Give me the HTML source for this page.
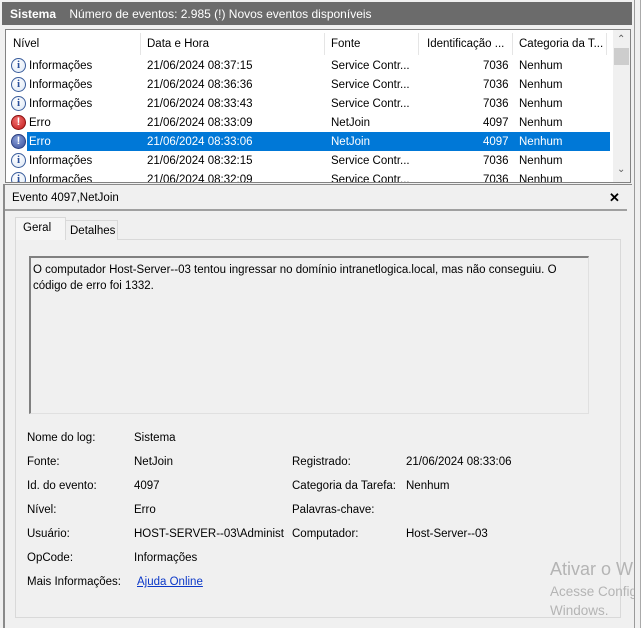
<!DOCTYPE html>
<html><head><meta charset="utf-8"><style>
*{margin:0;padding:0;box-sizing:border-box}
body{width:641px;height:628px;overflow:hidden;background:#f0f0f0;font-family:"Liberation Sans",sans-serif;font-size:11.5px;color:#000;position:relative}
.a{position:absolute;white-space:nowrap}
.title{left:2px;top:2px;width:630px;height:23px;background:#6b6b6b;color:#fff;font-size:12px;line-height:24px;padding-left:8px}
.list{left:5px;top:29px;width:626px;height:154px;background:#fff;border:1px solid #828282;overflow:hidden}
.hdr{position:absolute;top:1px;left:0;height:24px;width:606px;line-height:26px}
.vd{position:absolute;top:2px;width:1px;height:22px;background:#e5e5e5}
.row{position:absolute;left:0;width:606px;height:19px;line-height:20px}
.ic{position:absolute;left:5px;top:2px;width:15px;height:15px;border-radius:50%;border:1px solid #3a5d9c;background:radial-gradient(circle at 40% 35%,#fff,#dbe6f5);color:#2a4f9a;font:bold 11px "Liberation Serif",serif;text-align:center;line-height:13px}
.er{border-color:#8a1010;background:radial-gradient(circle at 40% 35%,#f07070,#c21a1a);color:#fff;font-family:"Liberation Sans";}
.es{border-color:#2a3f80;background:radial-gradient(circle at 40% 35%,#8a9fd8,#3a4f9a);color:#fff;font-family:"Liberation Sans";}
.sb{position:absolute;left:607px;top:0;width:17px;height:152px;background:#f0f0f0}
.pane{left:3px;top:184px;width:629px;height:444px;border-left:2px solid #8a8a8a;border-top:1px solid #8a8a8a}
</style></head><body>
<div class="a" style="left:0;top:0;width:641px;height:628px;border-right:1px solid #aaa"></div>
<div class="a" style="left:634px;top:0;width:1px;height:628px;background:#9a9a9a"></div>
<div class="a title"><b>Sistema</b>&nbsp;&nbsp;&nbsp;&nbsp;Número de eventos: 2.985 (!) Novos eventos disponíveis</div>
<div class="a list">
 <div class="hdr"><span class="a" style="left:7px">Nível</span><span class="vd" style="left:134px"></span><span class="a" style="left:141px">Data e Hora</span><span class="vd" style="left:318px"></span><span class="a" style="left:325px">Fonte</span><span class="vd" style="left:412px"></span><span class="a" style="left:421px">Identificação ...</span><span class="vd" style="left:506px"></span><span class="a" style="left:513px">Categoria da T...</span><span class="vd" style="left:600px"></span></div>
 <div class="sb"><span class="a" style="left:4px;top:4px;font-size:10px;color:#606060">&#8963;</span><div class="a" style="left:1px;top:18px;width:15px;height:17px;background:#cdcdcd"></div><span class="a" style="left:4px;top:134px;font-size:10px;color:#606060">&#8964;</span></div>
 <div class="row" style="top:26px"><span class="ic">i</span><span class="a" style="left:23px">Informações</span><span class="a" style="left:141px">21/06/2024 08:37:15</span><span class="a" style="left:325px">Service Contr...</span><span class="a" style="left:477px">7036</span><span class="a" style="left:513px">Nenhum</span></div>
 <div class="row" style="top:45px"><span class="ic">i</span><span class="a" style="left:23px">Informações</span><span class="a" style="left:141px">21/06/2024 08:36:36</span><span class="a" style="left:325px">Service Contr...</span><span class="a" style="left:477px">7036</span><span class="a" style="left:513px">Nenhum</span></div>
 <div class="row" style="top:64px"><span class="ic">i</span><span class="a" style="left:23px">Informações</span><span class="a" style="left:141px">21/06/2024 08:33:43</span><span class="a" style="left:325px">Service Contr...</span><span class="a" style="left:477px">7036</span><span class="a" style="left:513px">Nenhum</span></div>
 <div class="row" style="top:83px"><span class="ic er">!</span><span class="a" style="left:23px">Erro</span><span class="a" style="left:141px">21/06/2024 08:33:09</span><span class="a" style="left:325px">NetJoin</span><span class="a" style="left:477px">4097</span><span class="a" style="left:513px">Nenhum</span></div>
 <div class="row" style="top:102px"><div class="a" style="left:21px;top:0;width:583px;height:19px;background:#0078d7"></div><span class="ic es">!</span><span class="a" style="left:23px;color:#fff">Erro</span><span class="a" style="left:141px;color:#fff">21/06/2024 08:33:06</span><span class="a" style="left:325px;color:#fff">NetJoin</span><span class="a" style="left:477px;color:#fff">4097</span><span class="a" style="left:513px;color:#fff">Nenhum</span></div>
 <div class="row" style="top:121px"><span class="ic">i</span><span class="a" style="left:23px">Informações</span><span class="a" style="left:141px">21/06/2024 08:32:15</span><span class="a" style="left:325px">Service Contr...</span><span class="a" style="left:477px">7036</span><span class="a" style="left:513px">Nenhum</span></div>
 <div class="row" style="top:140px"><span class="ic">i</span><span class="a" style="left:23px">Informações</span><span class="a" style="left:141px">21/06/2024 08:32:09</span><span class="a" style="left:325px">Service Contr...</span><span class="a" style="left:477px">7036</span><span class="a" style="left:513px">Nenhum</span></div>
</div>
<div class="a pane"></div>
<div class="a" style="left:12px;top:192px">Evento 4097,NetJoin</div>
<div class="a" style="left:609px;top:190px;font-weight:bold;font-size:13px">&#x2715;</div>
<div class="a" style="left:5px;top:209px;width:622px;height:2px;background:#a0a0a0"></div>
<div class="a" style="left:15px;top:239px;width:606px;height:379px;background:#f0f0f0;border:1px solid #d9d9d9"></div>
<div class="a" style="left:65px;top:220px;width:53px;height:20px;border:1px solid #d9d9d9;border-bottom:none;background:#f0f0f0;line-height:20px;padding-left:4px">Detalhes</div>
<div class="a" style="left:15px;top:217px;width:51px;height:23px;border:1px solid #d9d9d9;border-bottom:none;background:#f5f5f5;line-height:21px;padding-left:7px">Geral</div>
<div class="a" style="left:29px;top:256px;width:560px;height:158px;border:1px solid #e0e0e0;border-top:2px solid #808080;border-left:2px solid #808080;background:#f0f0f0;padding:4px 0 0 2px;line-height:16px;white-space:normal">O computador Host-Server--03 tentou ingressar no domínio intranetlogica.local, mas não conseguiu. O código de erro foi 1332.</div>
<div class="a" style="left:27px;top:432px">Nome do log:</div><div class="a" style="left:134px;top:432px">Sistema</div>
<div class="a" style="left:27px;top:456px">Fonte:</div><div class="a" style="left:134px;top:456px">NetJoin</div>
<div class="a" style="left:292px;top:456px">Registrado:</div><div class="a" style="left:406px;top:456px">21/06/2024 08:33:06</div>
<div class="a" style="left:27px;top:480px">Id. do evento:</div><div class="a" style="left:134px;top:480px">4097</div>
<div class="a" style="left:292px;top:480px">Categoria da Tarefa:</div><div class="a" style="left:406px;top:480px">Nenhum</div>
<div class="a" style="left:27px;top:504px">Nível:</div><div class="a" style="left:134px;top:504px">Erro</div>
<div class="a" style="left:292px;top:504px">Palavras-chave:</div>
<div class="a" style="left:27px;top:528px">Usuário:</div><div class="a" style="left:134px;top:528px;width:152px;overflow:hidden">HOST-SERVER--03\Administ</div>
<div class="a" style="left:292px;top:528px">Computador:</div><div class="a" style="left:406px;top:528px">Host-Server--03</div>
<div class="a" style="left:27px;top:552px">OpCode:</div><div class="a" style="left:134px;top:552px">Informações</div>
<div class="a" style="left:27px;top:576px">Mais Informações:</div><div class="a" style="left:137px;top:576px;color:#0b38c8;text-decoration:underline">Ajuda Online</div>
<div class="a" style="left:550px;top:559px;font-size:18px;color:#b4b4b4;width:84px;overflow:hidden">Ativar o Windows</div>
<div class="a" style="left:550px;top:584px;font-size:13.5px;color:#b4b4b4;width:84px;overflow:hidden">Acesse Configurações</div>
<div class="a" style="left:550px;top:603px;font-size:13.5px;color:#b4b4b4">Windows.</div>
</body></html>
